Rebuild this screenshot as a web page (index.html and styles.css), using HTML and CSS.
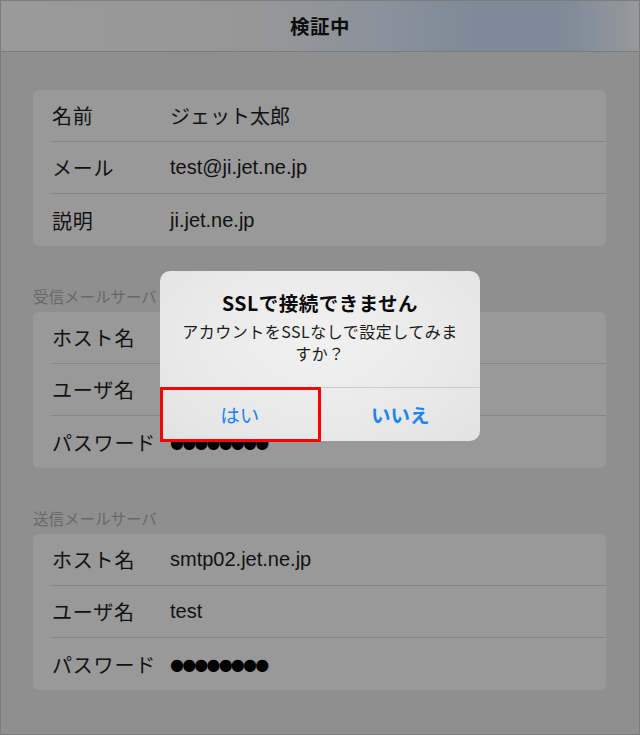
FILE: index.html
```html
<!DOCTYPE html>
<html lang="ja">
<head>
<meta charset="utf-8">
<title>検証中</title>
<link rel="stylesheet" href="styles.css">
</head>
<body>
<div class="frame">
  <header class="nav"><h1 class="nav-title">検証中</h1></header>

  <section class="group first">
    <div class="card">
      <div class="row"><span class="label">名前</span><span class="value">ジェット太郎</span></div>
      <div class="row"><span class="label">メール</span><span class="value">test@ji.jet.ne.jp</span></div>
      <div class="row"><span class="label">説明</span><span class="value">ji.jet.ne.jp</span></div>
    </div>
  </section>

  <section class="group">
    <h2 class="group-title">受信メールサーバ</h2>
    <div class="card">
      <div class="row"><span class="label">ホスト名</span><span class="value"></span></div>
      <div class="row"><span class="label">ユーザ名</span><span class="value"></span></div>
      <div class="row"><span class="label">パスワード</span><span class="value dots">●●●●●●●●</span></div>
    </div>
  </section>

  <section class="group">
    <h2 class="group-title">送信メールサーバ</h2>
    <div class="card">
      <div class="row"><span class="label">ホスト名</span><span class="value">smtp02.jet.ne.jp</span></div>
      <div class="row"><span class="label">ユーザ名</span><span class="value">test</span></div>
      <div class="row"><span class="label">パスワード</span><span class="value dots">●●●●●●●●</span></div>
    </div>
  </section>

  <div class="alert">
    <div class="alert-body">
      <div class="alert-title">SSLで接続できません</div>
      <div class="alert-msg">アカウントをSSLなしで設定してみま<br>すか？</div>
    </div>
    <div class="alert-buttons">
      <button class="alert-btn yes">はい</button>
      <button class="alert-btn no">いいえ</button>
    </div>
    <div class="highlight"></div>
  </div>
</div>
</body>
</html>
```

FILE: styles.css
```css
* { box-sizing: border-box; }
html, body { margin: 0; padding: 0; }
body {
  font-family: "Liberation Sans", "Noto Sans CJK JP", sans-serif;
  background: #8f8f8f;
}
.frame {
  position: relative;
  width: 640px;
  height: 735px;
  border: 1px solid #7c7c7c;
  background: #8f8f8f;
  overflow: hidden;
}
.nav {
  height: 52px;
  margin: -1px 0 0;
  border-bottom: 1px solid #7a7a7a;
  background: linear-gradient(90deg, #9a9a9a 0%, #979798 40%, #8a929b 60%, #7e8a98 74%, #7e8a98 88%, #97999c 100%);
  display: flex;
  align-items: center;
  justify-content: center;
}
.nav-title {
  margin: 0;
  font-family: "Noto Sans CJK JP", sans-serif;
  font-size: 19.5px;
  font-weight: 700;
  color: #0c0c0c;
  letter-spacing: 0.5px;
}
.group { padding: 0 33px 0 32px; }
.group.first { padding-top: 38px; }
.group-title {
  margin: 0;
  padding: 40px 0 6px 0;
  font-family: "Noto Sans CJK JP", sans-serif;
  font-size: 15.5px;
  line-height: 20px;
  font-weight: 400;
  color: #686868;
}
.card {
  background: #999999;
  border-radius: 6px;
  overflow: hidden;
}
.row {
  height: 52px;
  display: flex;
  align-items: center;
  margin-left: 18px;
  border-bottom: 1px solid #858585;
}
.row:last-child { border-bottom: none; }
.label {
  width: 119px;
  padding-left: 1px;
  font-family: "Noto Sans CJK JP", sans-serif;
  font-size: 20px;
  letter-spacing: 0.8px;
  color: #111;
}
.value {
  font-size: 20px;
  color: #111;
}
.dots {
  font-family: "DejaVu Sans", sans-serif;
  font-size: 16px;
  letter-spacing: -1.8px;
  color: #000;
}
.alert {
  position: absolute;
  left: 159px;
  top: 270px;
  width: 320px;
  height: 170px;
  border-radius: 10px;
  background: radial-gradient(ellipse at 50% 40%, #f1f1f1 0%, #e9e9e9 60%, #e2e2e2 100%);
  display: flex;
  flex-direction: column;
}
.alert-body {
  height: 117px;
  padding-top: 20px;
  text-align: center;
  border-bottom: 1px solid #c9c9c9;
}
.alert-title {
  font-family: "Noto Sans CJK JP", sans-serif;
  font-size: 19.5px;
  font-weight: 700;
  line-height: 24px;
  letter-spacing: 0.5px;
  color: #0a0a0a;
}
.alert-msg {
  margin-top: 5px;
  font-family: "Noto Sans CJK JP", sans-serif;
  font-size: 16px;
  letter-spacing: 0.5px;
  line-height: 22px;
  color: #1a1a1a;
}
.alert-buttons {
  flex: 1;
  display: flex;
}
.alert-btn {
  flex: 1;
  border: none;
  background: transparent;
  font-family: "Noto Sans CJK JP", sans-serif;
  font-size: 19.5px;
  color: #1c84f2;
  padding: 0;
}
.alert-btn.yes { border-right: 1px solid #c9c9c9; font-weight: 400; }
.alert-btn.no { font-weight: 700; }
.highlight {
  position: absolute;
  left: 0;
  top: 116px;
  width: 161px;
  height: 55px;
  border: 3px solid #ff0000;
  border-radius: 1px;
}
```
